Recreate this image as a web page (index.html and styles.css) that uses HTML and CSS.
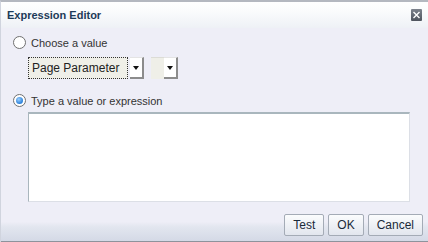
FILE: index.html
```html
<!DOCTYPE html>
<html>
<head>
	<title>Expression Editor</title>
	<link rel="stylesheet" href="styles.css">
</head>
<body>
<div class="dlg">
  <div class="hd">
    <span class="ttl">Expression Editor</span>
    <span class="cls">
      <svg width="11" height="12" viewBox="0 0 11 12"><path d="M2.5 3 L8.5 9 M8.5 3 L2.5 9" stroke="#fff" stroke-width="1.4"/></svg>
    </span>
  </div>
  <div class="bd">
    <div class="opt"><span class="rd"></span><span>Choose a value</span></div>
    <div class="sels">
      <div class="sel">
        <span class="val">Page Parameter</span>
        <span class="arr"></span>
      </div>
      <div class="sel sm">
        <span class="val"></span>
        <span class="arr"></span>
      </div>
    </div>
    <div class="opt two"><span class="rd on"></span><span>Type a value or expression</span></div>
    <div class="ta"></div>
  </div>
  <div class="ft">
    <button class="btn">Test</button>
    <button class="btn">OK</button>
    <button class="btn">Cancel</button>
  </div>
</div>
</body>
</html>
```

FILE: styles.css
```css
body,div,span{margin:0;padding:0;}
body{
  font-family: "Liberation Sans", Arial, sans-serif;
  font-size: 11px;
  color: #222;
  background: #fff;
}
.dlg{
  width: 428px;
  height: 242px;
  box-sizing: border-box;
  border-top: 2px solid #b4b8c0;
  border-left: 1px solid #d0d4de;
  background: #eeeef7;
  display: flex;
  flex-direction: column;
}
.hd{
  height: 26px;
  display: flex;
  align-items: center;
  justify-content: space-between;
  padding: 0 6px 0 6px;
  background: linear-gradient(#ffffff 0, #fbfcfd 30%, #eef1f6 100%);
}
.ttl{
  font-weight: bold;
  color: #1d3b58;
  font-size: 11px;
}
.cls{
  width: 11px;
  height: 12px;
  background: linear-gradient(#7c828c, #4e545e);
  border-radius: 1px;
  display: flex;
}
.bd{
  flex: 1;
  padding: 7px 0 0 12px;
}
.opt{
  display: flex;
  align-items: center;
  height: 15px;
  gap: 5px;
  color: #333;
}
.opt.two{
  margin-top: 14px;
}
.rd{
  width: 11px;
  height: 11px;
  border: 1px solid #707070;
  border-radius: 50%;
  background: #fff;
  box-sizing: content-box;
  display: flex;
  align-items: center;
  justify-content: center;
}
.rd.on::after{
  content: "";
  width: 7px;
  height: 7px;
  border-radius: 50%;
  background: radial-gradient(circle at 40% 35%, #9cd0ff, #2a7fd8 70%);
}
.sels{
  display: flex;
  gap: 7px;
  margin: 7px 0 0 15px;
}
.sel{
  display: flex;
  height: 22px;
  gap: 2px;
}
.sel .val{
  width: 100px;
  box-sizing: border-box;
  border: 1px dotted #333;
  background: #efefe8;
  font-size: 12px;
  color: #222;
  display: flex;
  align-items: center;
  padding-left: 3px;
}
.sel.sm .val{
  width: 13px;
  border: none;
  border-top: 1px solid #dcdcd6;
}
.sel.sm{
  gap: 0;
}
.arr{
  width: 14px;
  box-sizing: border-box;
  background: #fff;
  border-right: 2px solid #8c8c8c;
  border-bottom: 2px solid #8c8c8c;
  border-top: 1px solid #e4e4e4;
  display: flex;
  align-items: center;
  justify-content: center;
}
.arr::after{
  content: "";
  border-left: 3px solid transparent;
  border-right: 3px solid transparent;
  border-top: 4px solid #111;
}
.ta{
  margin: 4px 0 0 15px;
  width: 382px;
  height: 90px;
  box-sizing: border-box;
  background: #fff;
  border: 1px solid #dcdfe6;
  border-top: 2px solid #a9b6bd;
  border-left: 1px solid #a9b6bd;
}
.ft{
  height: 36px;
  box-sizing: border-box;
  display: flex;
  justify-content: flex-end;
  align-items: flex-start;
  gap: 4px;
  padding: 8px 5px 0 0;
  background: linear-gradient(#eeeef7 0, #eeeef7 45%, #e2e6ef 60%, #d4d9e6 100%);
  border-bottom: 1px solid #8e939c;
}
.btn{
  height: 22px;
  font-family: "Liberation Sans", Arial, sans-serif;
  font-size: 12px;
  color: #1a2a3a;
  border: 1px solid #a4abb6;
  border-radius: 2px;
  background: linear-gradient(#fbfcfd, #e2e6ee);
  padding: 0 8px;
  margin: 0;
}
```
